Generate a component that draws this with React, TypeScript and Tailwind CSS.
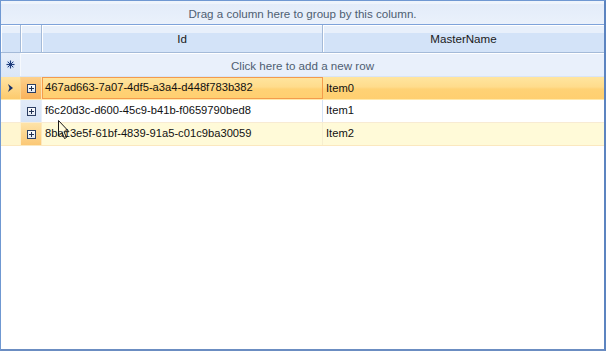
import React from "react";

const rows = [
  { id: "467ad663-7a07-4df5-a3a4-d448f783b382", name: "Item0" },
  { id: "f6c20d3c-d600-45c9-b41b-f0659790bed8", name: "Item1" },
  { id: "8ba13e5f-61bf-4839-91a5-c01c9ba30059", name: "Item2" },
];

function ExpandBox() {
  return (
    <svg width="9" height="9" viewBox="0 0 9 9" className="block">
      <defs>
        <linearGradient id="eb" x1="0" y1="0" x2="0" y2="1">
          <stop offset="0" stopColor="#ffffff" />
          <stop offset="1" stopColor="#dfe6f0" />
        </linearGradient>
      </defs>
      <rect x="0.5" y="0.5" width="8" height="8" fill="url(#eb)" stroke="#2c3f63" />
      <rect x="2" y="4" width="5" height="1" fill="#1e2f52" />
      <rect x="4" y="2" width="1" height="5" fill="#1e2f52" />
    </svg>
  );
}

function Arrow() {
  return (
    <svg width="6" height="8" viewBox="0 0 6 8" className="block">
      <polygon points="0,0 5,4 0,8 1.5,4" fill="#15306a" />
    </svg>
  );
}

function Asterisk() {
  return (
    <svg width="9" height="9" viewBox="0 0 9 9" className="block">
      <circle cx="4.5" cy="4.5" r="4" fill="#b9cff0" opacity="0.6" />
      <line x1="4.5" y1="0.5" x2="4.5" y2="8.5" stroke="#1d3c7c" strokeWidth="1" />
      <line x1="0.5" y1="4.5" x2="8.5" y2="4.5" stroke="#1d3c7c" strokeWidth="1" />
      <line x1="1.7" y1="1.7" x2="7.3" y2="7.3" stroke="#1d3c7c" strokeWidth="1" />
      <line x1="7.3" y1="1.7" x2="1.7" y2="7.3" stroke="#1d3c7c" strokeWidth="1" />
      <circle cx="4.5" cy="4.5" r="1.2" fill="#1d3c7c" />
    </svg>
  );
}

function Cursor() {
  return (
    <svg width="12" height="20" viewBox="0 0 12 20" className="absolute left-[57px] top-[119px]">
      <path
        d="M0.5 0.5 L0.5 16 L4 12.5 L6.5 18.5 L8.5 17.5 L6 11.7 L11 11.7 Z"
        fill="#ffffff"
        fillOpacity="0.2"
        stroke="#1a1a1a"
        strokeWidth="1"
        strokeLinejoin="miter"
      />
    </svg>
  );
}

export default function App() {
  return (
    <div className="relative w-[606px] h-[351px] overflow-hidden bg-white border-l border-t border-[#6f98d2] border-r-2 border-r-[#5c84c0] border-b-2 border-b-[#6b8dc2] font-['Liberation_Sans',sans-serif] text-[11.2px] leading-none">
      {/* group panel */}
      <div className="h-[23px] pt-[3px] flex items-center justify-center text-[11.6px] text-[#4e5e72] bg-[linear-gradient(to_bottom,#eef4fc_0%,#eef4fc_12%,#e3ecf9_12%,#e6eefa_50%,#eaf1fb_100%)]">
        Drag a column here to group by this column.
      </div>
      <div className="h-px bg-[#7ea3da]" />
      {/* header */}
      <div className="flex h-[28px] border-b border-[#a4bad8] text-[11.6px] text-[#1a1a1a]">
        <div className="w-[20px] border-r border-[#a4bad8] shadow-[inset_1px_1px_0_#ffffff] bg-[linear-gradient(to_bottom,#e8f0fb_0%,#e8f0fb_28%,#d3e3f8_28%,#d3e3f8_100%)]" />
        <div className="w-[21px] border-r border-[#a4bad8] shadow-[inset_1px_1px_0_#ffffff] bg-[linear-gradient(to_bottom,#e8f0fb_0%,#e8f0fb_28%,#d3e3f8_28%,#d3e3f8_100%)]" />
        <div className="w-[281px] border-r border-[#a4bad8] shadow-[inset_1px_1px_0_#ffffff] bg-[linear-gradient(to_bottom,#e8f0fb_0%,#e8f0fb_28%,#d3e3f8_28%,#d3e3f8_100%)] flex items-center justify-center pt-px">
          Id
        </div>
        <div className="flex-1 shadow-[inset_1px_1px_0_#ffffff] bg-[linear-gradient(to_bottom,#e8f0fb_0%,#e8f0fb_28%,#d3e3f8_28%,#d3e3f8_100%)] flex items-center justify-center pt-px">
          MasterName
        </div>
      </div>
      {/* new row */}
      <div className="relative flex h-[24px] border-b border-[#d9e5f6] bg-[#e9f0fb] shadow-[inset_0_1px_0_#ffffff]">
        <div className="w-[20px] border-r border-[#f6f9fd] bg-[linear-gradient(to_bottom,#e6eefa,#dbe7f7)] flex items-center justify-center">
          <Asterisk />
        </div>
        <div className="absolute inset-0 flex items-center justify-center pt-[3px] text-[11.6px] text-[#4e5e72]">
          Click here to add a new row
        </div>
      </div>
      {/* rows */}
      {rows.map((r, i) => {
        if (i === 0) {
          return (
            <div key={r.id} className="flex h-[23px] border-b border-[#ffe9ad] bg-[linear-gradient(to_bottom,#ffe59f_0%,#ffdc8c_45%,#ffd275_55%,#ffcf70_100%)] text-[#111]">
              <div className="w-[20px] border-r border-[#fbd58f] bg-[linear-gradient(to_bottom,#ffe4a3,#fdca6c)] flex items-center justify-center">
                <Arrow />
              </div>
              <div className="w-[21px] border-r border-[#fce4b6] bg-[linear-gradient(to_bottom,#fdd08c,#f9b25a)] flex items-center justify-center">
                <ExpandBox />
              </div>
              <div className="w-[281px] border border-[#f49b4c] flex items-center pl-[2px]">
                {r.id}
              </div>
              <div className="flex-1 flex items-center pl-[3px] pt-px">{r.name}</div>
            </div>
          );
        }
        const alt = i % 2 === 0;
        return (
          <div
            key={r.id}
            className={
              alt
                ? "flex h-[23px] border-b border-[#fbe8bf] bg-[#fffad8] text-[#111]"
                : "flex h-[23px] border-b border-[#f8ebd3] bg-white text-[#111]"
            }
          >
            <div className={alt ? "w-[20px] border-r border-[#fff0c8] bg-[#fff6d0]" : "w-[20px] border-r border-[#eef3fa] bg-white"} />
            <div
              className={
                alt
                  ? "w-[21px] border-r border-[#fce7bd] bg-[linear-gradient(to_bottom,#fee3a8,#fbc876)] flex items-center justify-center"
                  : "w-[21px] border-r border-[#e9eff8] bg-[linear-gradient(to_bottom,#e2ebf8,#d6e3f6)] flex items-center justify-center"
              }
            >
              <ExpandBox />
            </div>
            <div className={alt ? "w-[281px] border-r border-[#f6eecf] flex items-center pl-[3px]" : "w-[281px] border-r border-[#d6e3f5] flex items-center pl-[3px]"}>
              {r.id}
            </div>
            <div className="flex-1 flex items-center pl-[3px]">{r.name}</div>
          </div>
        );
      })}
      <Cursor />
    </div>
  );
}
